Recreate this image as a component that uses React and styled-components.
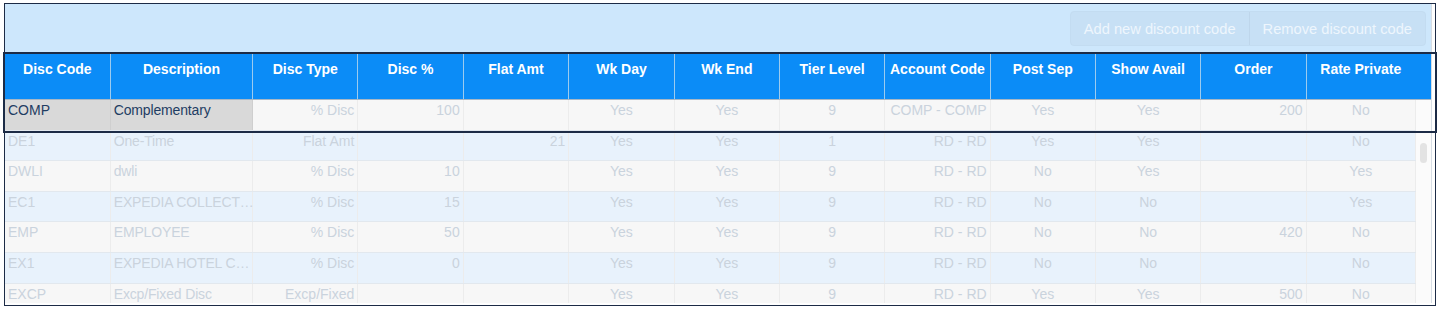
import styled, { createGlobalStyle } from 'styled-components';

const GlobalStyle = createGlobalStyle`
  *, *::before, *::after { box-sizing: border-box; }
  body {
    margin: 0;
    background: #ffffff;
    font-family: 'Liberation Sans', Arial, sans-serif;
  }
`;

const columns = [
  { key: 'code', label: 'Disc Code', width: 105.7, align: 'left' },
  { key: 'desc', label: 'Description', width: 142.6, align: 'left' },
  { key: 'type', label: 'Disc Type', width: 105, align: 'right' },
  { key: 'pct', label: 'Disc %', width: 105.4, align: 'right' },
  { key: 'flat', label: 'Flat Amt', width: 105.6, align: 'right' },
  { key: 'wkday', label: 'Wk Day', width: 105.4, align: 'center' },
  { key: 'wkend', label: 'Wk End', width: 105.3, align: 'center' },
  { key: 'tier', label: 'Tier Level', width: 105.3, align: 'center' },
  { key: 'acct', label: 'Account Code', width: 105.4, align: 'right' },
  { key: 'post', label: 'Post Sep', width: 105.3, align: 'center' },
  { key: 'avail', label: 'Show Avail', width: 105.3, align: 'center' },
  { key: 'order', label: 'Order', width: 105.4, align: 'right' },
  { key: 'priv', label: 'Rate Private', width: 109.3, align: 'center' },
];

const rows = [
  ['COMP', 'Complementary', '% Disc', '100', '', 'Yes', 'Yes', '9', 'COMP - COMP', 'Yes', 'Yes', '200', 'No'],
  ['DE1', 'One-Time', 'Flat Amt', '', '21', 'Yes', 'Yes', '1', 'RD - RD', 'Yes', 'Yes', '', 'No'],
  ['DWLI', 'dwli', '% Disc', '10', '', 'Yes', 'Yes', '9', 'RD - RD', 'No', 'Yes', '', 'Yes'],
  ['EC1', 'EXPEDIA COLLECT…', '% Disc', '15', '', 'Yes', 'Yes', '9', 'RD - RD', 'No', 'No', '', 'Yes'],
  ['EMP', 'EMPLOYEE', '% Disc', '50', '', 'Yes', 'Yes', '9', 'RD - RD', 'No', 'No', '420', 'No'],
  ['EX1', 'EXPEDIA HOTEL C…', '% Disc', '0', '', 'Yes', 'Yes', '9', 'RD - RD', 'No', 'No', '', 'No'],
  ['EXCP', 'Excp/Fixed Disc', 'Excp/Fixed', '', '', 'Yes', 'Yes', '9', 'RD - RD', 'Yes', 'Yes', '500', 'No'],
];

const Frame = styled.div`
  position: relative;
  margin: 3px 0 0 4px;
  width: 1432px;
  height: 303px;
  border: 1px solid #1c2b46;
  background: #ffffff;
`;

const Panel = styled.div`
  width: 1427px;
  height: 299px;
  display: flex;
  flex-direction: column;
  border-right: 1px solid #d6dde4;
  background: #cde7fc;
`;

const Toolbar = styled.div`
  height: 49px;
  display: flex;
  justify-content: flex-end;
  align-items: flex-start;
  padding: 7px 5px 0 0;
`;

const ButtonGroup = styled.div`
  display: flex;
  height: 35px;
  border: 1px solid #c3dcf1;
  border-radius: 4px;
  background: #c7e0f5;
  overflow: hidden;
`;

const ToolButton = styled.button`
  border: none;
  border-left: ${(p) => (p.$first ? 'none' : '1px solid #bed6eb')};
  background: transparent;
  padding: 0 13px;
  font-family: 'Liberation Sans', Arial, sans-serif;
  font-size: 14.7px;
  color: #eef6fd;
  cursor: default;
`;

const HeaderRow = styled.div`
  height: 47px;
  display: flex;
  background: #0b8cf7;
  border-bottom: 1px solid #a7b7c6;
`;

const HeadCell = styled.div`
  flex: 0 0 auto;
  padding-top: 8px;
  text-align: center;
  font-size: 14px;
  font-weight: 700;
  line-height: 16px;
  color: #ffffff;
  border-right: 1px solid ${(p) => (p.$last ? 'transparent' : '#9ccbef')};
  white-space: nowrap;
`;

const HeadFiller = styled.div`
  flex: 1;
`;

const Body = styled.div`
  height: 203px;
  display: flex;
  overflow: hidden;
  background: #ffffff;
`;

const RowList = styled.div`
  width: 1411px;
  display: flex;
  flex-direction: column;
`;

const Row = styled.div`
  flex: 0 0 30.6px;
  display: flex;
  background: ${(p) => (p.$alt ? '#e8f2fc' : '#f7f7f7')};
  border-bottom: 1px solid #e2e8ee;
`;

const Cell = styled.div`
  flex: 0 0 auto;
  padding: 2px ${(p) => (p.$align === 'left' ? '0' : '3px')} 0 3px;
  font-size: 14px;
  line-height: 17px;
  text-align: ${(p) => p.$align};
  color: ${(p) => (p.$selected ? '#1f3d63' : '#cad3dd')};
  background: ${(p) => (p.$selected ? '#d9d9d9' : 'transparent')};
  border-right: 1px solid ${(p) => (p.$selected ? '#cfcfcf' : '#ececec')};
  white-space: nowrap;
  letter-spacing: ${(p) => (p.$tight ? '-0.15px' : '0')};
`;

const ScrollTrack = styled.div`
  position: relative;
  flex: 1;
  background: #fbfbfb;
`;

const ScrollThumb = styled.div`
  position: absolute;
  top: 43px;
  left: 4px;
  width: 7px;
  height: 20px;
  border-radius: 4px;
  background: #e3e3e3;
`;

const Highlight = styled.div`
  position: absolute;
  left: -2px;
  top: 48px;
  width: 1434px;
  height: 81px;
  border: 2px solid #1c2b46;
  pointer-events: none;
`;

export default function App() {
  return (
    <>
      <GlobalStyle />
      <Frame>
        <Panel>
          <Toolbar>
            <ButtonGroup>
              <ToolButton $first>Add new discount code</ToolButton>
              <ToolButton>Remove discount code</ToolButton>
            </ButtonGroup>
          </Toolbar>
          <HeaderRow>
            {columns.map((c, j) => (
              <HeadCell key={c.key} $last={j === columns.length - 1} style={{ width: c.width }}>
                {c.label}
              </HeadCell>
            ))}
            <HeadFiller />
          </HeaderRow>
          <Body>
            <RowList>
              {rows.map((r, i) => (
                <Row key={r[0]} $alt={i % 2 === 1}>
                  {columns.map((c, j) => (
                    <Cell
                      key={c.key}
                      $align={c.align}
                      $selected={i === 0 && j < 2}
                      $tight={j === 1}
                      style={{ width: c.width }}
                    >
                      {r[j]}
                    </Cell>
                  ))}
                </Row>
              ))}
            </RowList>
            <ScrollTrack>
              <ScrollThumb />
            </ScrollTrack>
          </Body>
        </Panel>
        <Highlight />
      </Frame>
    </>
  );
}
